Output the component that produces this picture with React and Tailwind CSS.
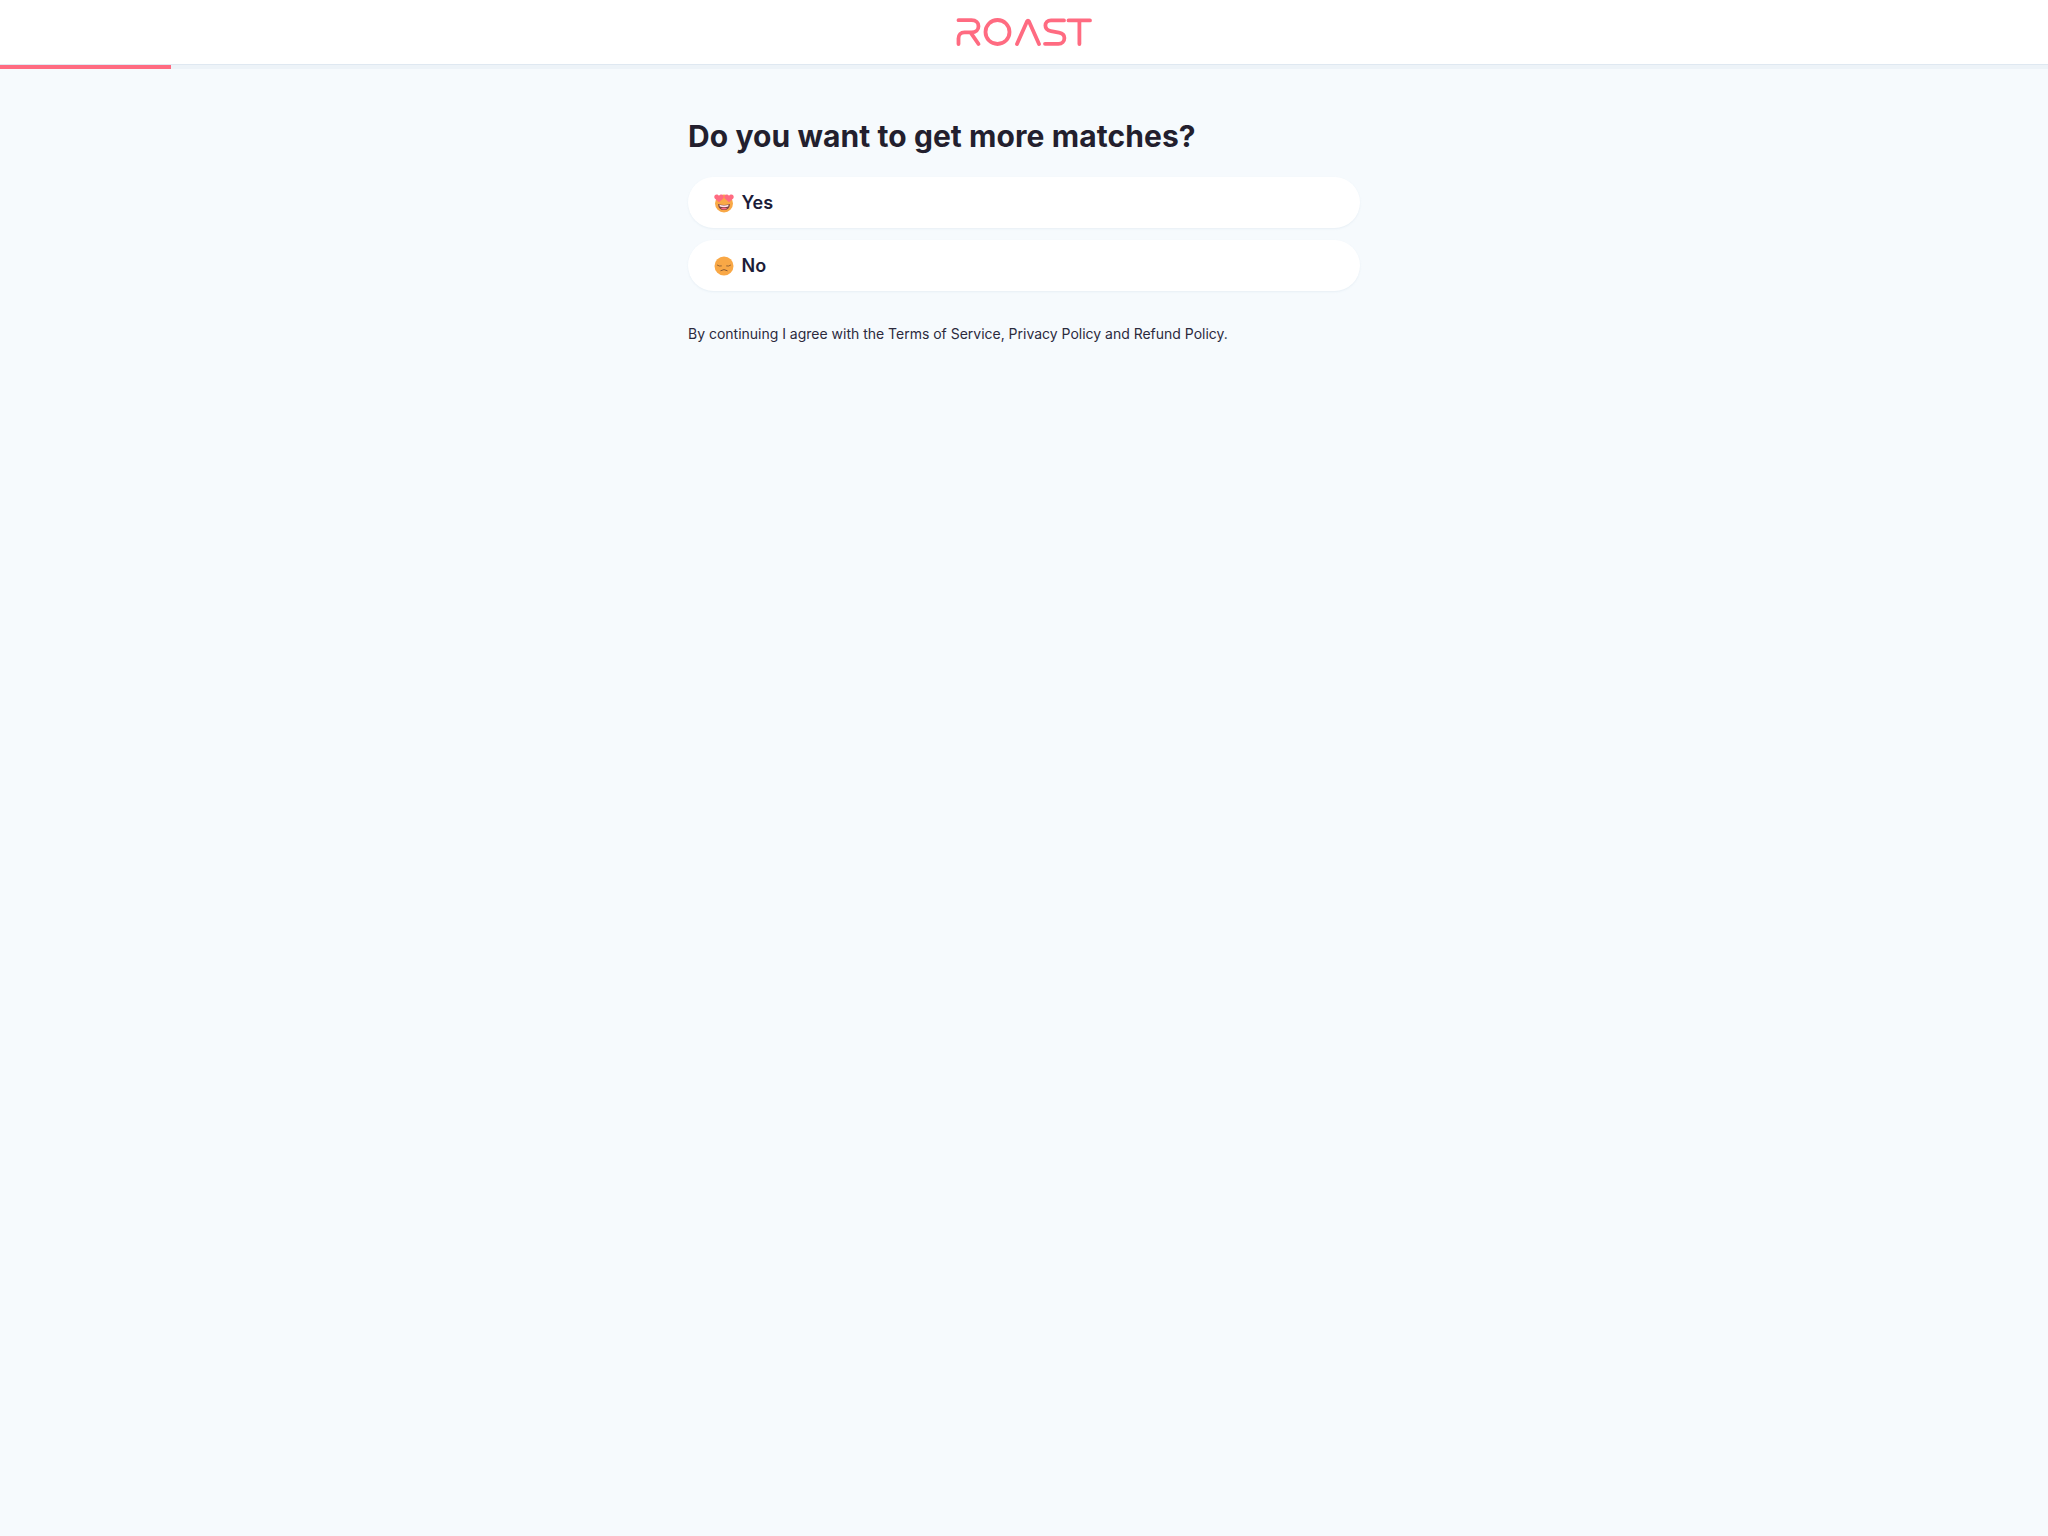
function Logo() {
  return (
    <svg width="136" height="30" viewBox="0 0 136 30" fill="none" stroke="#ff6b81" strokeWidth="3.8" strokeLinecap="round" strokeLinejoin="round">
      {/* R */}
      <path d="M2.5 3.2H15.5C20 3.2 22.5 6 22.5 9.2C22.5 12.6 20 15.4 15.5 15.4H8.5C4.8 15.4 2.5 18 2.5 21.5V27M14.5 15.4L22.5 27" />
      {/* O */}
      <circle cx="41.5" cy="15" r="12" />
      {/* A sin barra */}
      <path d="M61 27L71 4.5Q72 2.6 73 4.5L83 27" />
      {/* S */}
      <path d="M108 3.4H95C91.5 3.4 89.4 5.6 89.4 8.6C89.4 11.6 91.5 13.6 95 14.2L103 15.6C106.4 16.2 108.4 18.2 108.4 21C108.4 24.4 106 26.8 102.4 26.8H89" />
      {/* T */}
      <path d="M112.5 3.4H134M123.4 3.4V27" />
    </svg>
  )
}

function HeartEyes() {
  return (
    <svg width="20" height="20" viewBox="0 0 20 20">
      <circle cx="10" cy="10.5" r="9" fill="#f9a846" />
      <path d="M4 11Q10 13 16 11Q15.5 17 10 17Q4.5 17 4 11Z" fill="#7a4444" />
      <path d="M5.4 11.8Q10 13 14.6 11.8L14.2 13.6Q10 14.6 5.8 13.6Z" fill="#ffe3e6" />
      <path d="M6.8 15.2Q10 14 13.2 15.2Q12 16.5 10 16.5Q8 16.5 6.8 15.2Z" fill="#ff6b81" />
      <path d="M5 9.2L.8 5.6C-.3 4.2 .4 1.6 2.6 1.6C3.8 1.6 4.6 2.2 5 3C5.4 2.2 6.2 1.6 7.4 1.6C9.6 1.6 10.3 4.2 9.2 5.6Z" fill="#ff6b81" />
      <path d="M15 9.2L10.8 5.6C9.7 4.2 10.4 1.6 12.6 1.6C13.8 1.6 14.6 2.2 15 3C15.4 2.2 16.2 1.6 17.4 1.6C19.6 1.6 20.3 4.2 19.2 5.6Z" fill="#ff6b81" />
    </svg>
  )
}

function SadFace() {
  return (
    <svg width="20" height="20" viewBox="0 0 20 20" fill="none">
      <circle cx="10" cy="10" r="9.5" fill="#f9a846" />
      <path d="M3.4 9.2Q5.2 10.6 7.4 10M12.6 10Q14.8 10.6 16.6 9.2" stroke="#7a5030" strokeWidth=".8" strokeLinecap="round" />
      <path d="M6.8 14.6Q10 12.4 13.2 14.6" stroke="#7a5030" strokeWidth=".9" strokeLinecap="round" />
    </svg>
  )
}

function Option({ icon, label }) {
  return (
    <button
      type="button"
      className="flex h-[51px] w-full items-center gap-[7.5px] rounded-[26px] bg-white pl-[26px] text-[18px] font-semibold text-[#1c1c38] shadow-[0_1px_2px_rgba(200,215,230,0.3)]"
    >
      {icon}
      <span>{label}</span>
    </button>
  )
}

export default function App() {
  return (
    <div className="min-h-screen bg-[#f6fafd] font-['Inter',sans-serif]">
      {/* Header */}
      <header className="flex h-[65px] items-center justify-center border-b border-[#dfe8f1] bg-white">
        <Logo />
      </header>

      {/* Progress */}
      <div className="h-1 bg-[#edf3f8]">
        <div className="h-full w-[171px] bg-[#ff6b81]" />
      </div>

      <main className="mx-auto w-[672px] pt-[45px]">
        <h1 className="text-[30px] leading-[44px] font-bold tracking-[0.08px] text-[#231f2e]">
          Do you want to get more matches?
        </h1>

        <div className="mt-[19px] flex flex-col gap-3">
          <Option icon={<HeartEyes />} label="Yes" />
          <Option icon={<SadFace />} label="No" />
        </div>

        <p className="mt-[33px] text-[14px] leading-5 tracking-[-0.01px] text-[#2c2a3d]">
          By continuing I agree with the Terms of Service, Privacy Policy and Refund Policy.
        </p>
      </main>
    </div>
  )
}
